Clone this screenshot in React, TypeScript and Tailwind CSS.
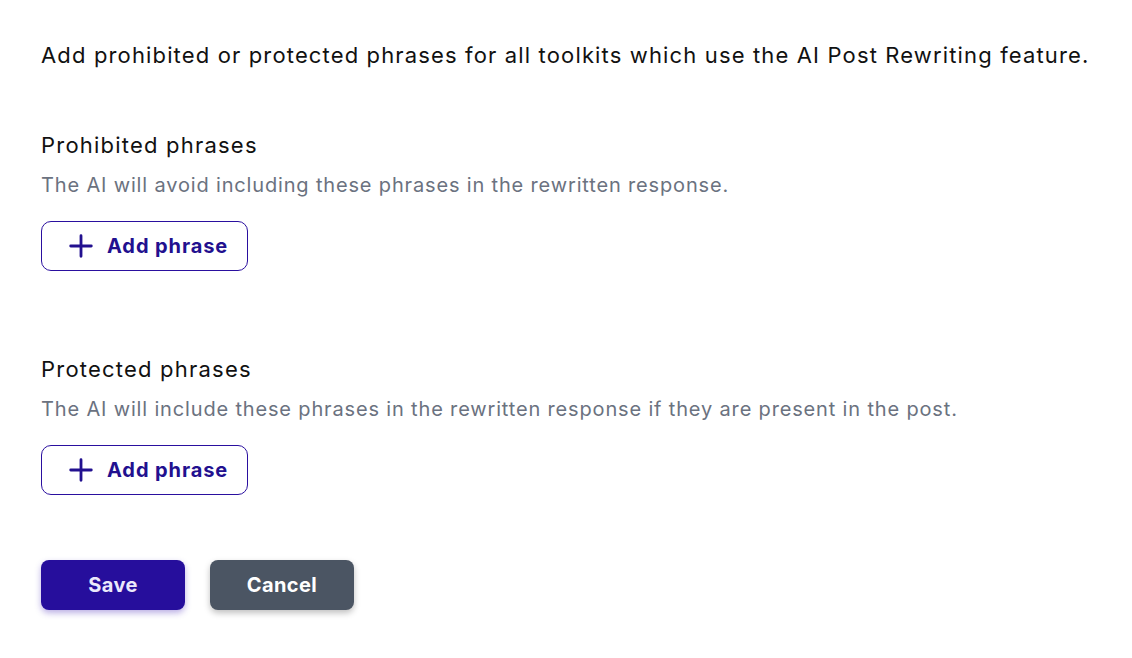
export default function App() {
  const PhraseSection = ({ title, desc }: { title: string; desc: string }) => (
    <div className="flex flex-col items-start">
      <h3 className="text-[22px] leading-[30px] tracking-[0.055em] text-[#111111]">{title}</h3>
      <p className="mt-[11px] text-[20px] leading-[28px] tracking-[0.042em] text-[#6b7280]">{desc}</p>
      <button className="mt-[22px] flex h-[50px] w-[207px] items-center justify-start gap-[13px] rounded-[10px] border border-[#2a0f9f] pl-[26px] text-[20px] font-bold tracking-[0.045em] text-[#22108f]">
        <svg width="26" height="26" viewBox="0 0 24 24" fill="none" stroke="currentColor" strokeWidth="2.6" strokeLinecap="round">
          <path d="M12 2.5v19M2.5 12h19" />
        </svg>
        <span>Add phrase</span>
      </button>
    </div>
  );
  return (
    <div className="min-h-[658px] w-full bg-white px-[41px] pt-[40px]" style={{ fontFamily: "Inter, 'Noto Sans', sans-serif" }}>
      <p className="text-[22px] leading-[30px] tracking-[0.052em] text-[#111111]">
        Add prohibited or protected phrases for all toolkits which use the AI Post Rewriting feature.
      </p>
      <div className="mt-[60px]">
        <PhraseSection title="Prohibited phrases" desc="The AI will avoid including these phrases in the rewritten response." />
      </div>
      <div className="mt-[83px]">
        <PhraseSection title="Protected phrases" desc="The AI will include these phrases in the rewritten response if they are present in the post." />
      </div>
      <div className="mt-[65px] flex gap-[25px]">
        <button className="h-[50px] w-[144px] rounded-[8px] bg-[#260e9c] text-[20px] font-bold tracking-[0.02em] text-[#ebe9fb] shadow-[0_3px_6px_rgba(60,30,180,0.35)]">
          Save
        </button>
        <button className="h-[50px] w-[144px] rounded-[8px] bg-[#4b5563] text-[20px] font-bold tracking-[0.02em] text-white shadow-[0_3px_6px_rgba(0,0,0,0.25)]">
          Cancel
        </button>
      </div>
    </div>
  );
}
